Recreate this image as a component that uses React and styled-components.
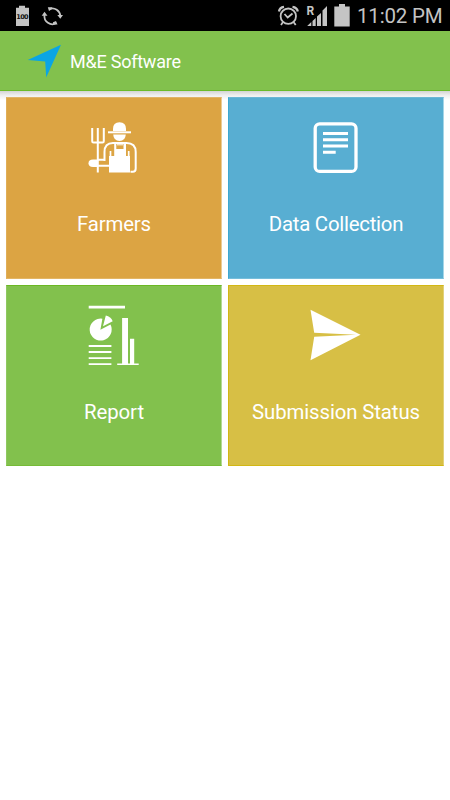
import React from 'react';
import styled, { createGlobalStyle } from 'styled-components';

const GlobalStyle = createGlobalStyle`
  * { box-sizing: border-box; }
  body { margin: 0; background: #fff; font-family: Roboto, "Noto Sans", sans-serif; }
`;

const Screen = styled.div`
  width: 450px;
  height: 800px;
  overflow: hidden;
  background: #fff;
`;

const StatusBar = styled.div`
  height: 31px;
  display: flex;
  justify-content: space-between;
  background: #000;
  color: #c4c4c4;
`;

const StatusIcons = styled.svg`
  display: block;
  height: 31px;
  width: ${(p) => p.$width}px;
`;

const StatusRight = styled.div`
  display: flex;
  padding-right: 8px;
`;

const Clock = styled.span`
  font-size: 20.5px;
  line-height: 32px;
  width: 85px;
  white-space: nowrap;
  letter-spacing: ${(p) => p.$spacing}px;
`;

const BadgeText = styled.text`
  font: 700 6.5px "DejaVu Sans", sans-serif;
  fill: #111;
`;

const RoamingText = styled.text`
  font: 700 12.5px Roboto, sans-serif;
  fill: #c4c4c4;
`;

const AppBar = styled.header`
  height: 60px;
  padding-left: 27px;
  display: flex;
  align-items: center;
  background: #82c14d;
  border-bottom: 1px solid #6bbb2b;
  color: #fff;
`;

const Logo = styled.svg`
  display: block;
  width: 35px;
  height: 36px;
`;

const Title = styled.h1`
  margin: 3px 0 0 8px;
  font-size: 18px;
  line-height: 24px;
  font-weight: 400;
  white-space: nowrap;
  letter-spacing: ${(p) => p.$spacing}px;
`;

const Grid = styled.main`
  display: grid;
  grid-template-columns: 216px 216px;
  grid-template-rows: 182px 181px;
  gap: 6px;
  padding: 6px;
  background: linear-gradient(#d4d4d4, #ededed 4px, #fff 9px);
`;

const Tile = styled.section`
  display: flex;
  flex-direction: column;
  align-items: center;
  padding-top: 12px;
  background: ${(p) => p.$color};
  border: 1px solid;
  border-color: ${(p) => p.$edges};
  color: #fff;
`;

const TileIcon = styled.svg`
  display: block;
  width: 80px;
  height: 80px;
  flex: none;
`;

const TileLabel = styled.span`
  margin-top: 22px;
  font-size: 20.4px;
  line-height: 24px;
  white-space: nowrap;
  letter-spacing: ${(p) => p.$spacing}px;
`;

const FarmerIcon = () => (
  <TileIcon viewBox="74 110 80 80" fill="none" stroke="#fff">
    <path d="M92.2 128V141.2Q92.2 142.5 93.5 142.5H102.5Q103.8 142.5 103.8 141.2V128M97.8 128V172.5" strokeWidth="2" />
    <path d="M113 131V129Q113 122.3 119.5 122.3T126 129V131Z" fill="#fff" stroke="none" />
    <path d="M108 132.3H131" strokeWidth="2" />
    <path d="M113.2 134.5H125.8Q125.3 141 119.5 141T113.2 134.5Z" fill="#fff" stroke="none" />
    <path d="M104.5 161V152Q104.5 143 113 143H126.5Q135.7 143 135.7 152V168.5Q135.7 171.8 132.8 171.8H130.5M104.5 159.8H98M98 165.8H110" strokeWidth="2" />
    <path d="M98 159.5H93Q88.5 159.5 88.5 163.2T93 167H98Z" fill="#fff" stroke="none" />
    <path d="M110.5 151V160M128.7 151V160" strokeWidth="1.7" />
    <path d="M109 156H114.2V143.5H116.3V149H123.5V143.5H126V156H130V172.5H109Z" fill="#fff" stroke="none" />
    <path d="M117 144.8H123" strokeWidth="1" />
  </TileIcon>
);

const DocumentIcon = () => (
  <TileIcon viewBox="296 110 80 80" fill="none" stroke="#fff" strokeWidth="3">
    <rect x="315.2" y="123.8" width="40.8" height="47.6" rx="4.5" strokeWidth="3.3" />
    <path d="M323 133.5H348M323 139.7H348M323 146H348M323 152.3H335.7" />
  </TileIcon>
);

const ReportIcon = () => (
  <TileIcon viewBox="74 298 80 80" fill="#fff">
    <path d="M88.7 305.8H125V308.4H88.7ZM88.7 345.1H111.4V347H88.7ZM88.7 351H111.4V352.9H88.7ZM88.7 357.2H111.4V359.1H88.7ZM88.7 363.2H111.4V365.1H88.7Z" />
    <path d="M122.1 318H128V363.6H130V338.7H134.2V363.6H138.7V365H117.2V363.6H122.1Z" />
    <path d="M102.4 318.7L100.4 329.7L110.5 324.6A11 11 0 1 1 102.4 318.7Z" />
    <path d="M105.8 315.5Q110.8 316.5 112.7 321.2L103 326.3Z" />
  </TileIcon>
);

const SendIcon = () => (
  <TileIcon viewBox="296 298 80 80" fill="#fff">
    <path d="M310.5 309.8L360.5 334.8L310.5 360.3L314.2 336.8L356 334.8L314.2 332.8Z" />
  </TileIcon>
);

const tiles = [
  { label: 'Farmers', color: '#dca443', edges: '#e0b468 #eccb94 #e3b564 #e0ae58', spacing: -0.15, Icon: FarmerIcon },
  { label: 'Data Collection', color: '#58aed2', edges: '#6cb7d6 #a5d5e7 #76bedb #3da8d2', spacing: -0.25, Icon: DocumentIcon },
  { label: 'Report', color: '#82c14d', edges: '#6bb723 #b3da93 #76bb37 #8fc861', spacing: -0.08, Icon: ReportIcon },
  { label: 'Submission Status', color: '#d7bf45', edges: '#d2b714 #e2d17a #d2b714 #d2b714', spacing: -0.12, Icon: SendIcon },
];

export default function App() {
  return (
    <Screen>
      <GlobalStyle />
      <StatusBar>
        <StatusIcons $width={70} viewBox="0 0 70 31" fill="#c4c4c4">
          <path d="M19 5.7H25V7.7H29V26H16V7.7H19Z" />
          <BadgeText x="16.2" y="18.7" textLength="12.4">100</BadgeText>
          <g fill="none" stroke="#c4c4c4" strokeWidth="1.8">
            <path d="M49.5 8.9A8 8 0 0 1 60.3 16M56.5 23.1A8 8 0 0 1 44.5 15" />
          </g>
          <path d="M57.3 15H63L60.3 18.7ZM41.7 15.7H47.5L44.5 11.8ZM47.8 7.3H52V9L49 11ZM57.5 24.4H53V22.3L56 21Z" />
        </StatusIcons>
        <StatusRight>
          <StatusIcons $width={87} viewBox="270 0 87 31" fill="#c4c4c4">
            <g fill="none" stroke="#c4c4c4" strokeWidth="1.8">
              <circle cx="288.3" cy="16.2" r="7.7" />
              <path d="M284.5 14L287.7 17.5L292.5 13.5M283 22L281 25M293.5 22L295.7 25" />
              <path d="M279 11.5Q279.5 7.5 284 6.9M292.5 6.9Q297 7.5 297.8 11.5" strokeWidth="2.3" />
            </g>
            <RoamingText x="306.5" y="14.8" textLength="7.7" lengthAdjust="spacingAndGlyphs">R</RoamingText>
            <path d="M307.2 26L311.3 22V26ZM312.5 21L315.7 18V26H312.5ZM317 16.5L321 13V26H317ZM322.5 10.5L327 6V26H322.5ZM339 4H345V6.5H349.7V26.5H334.3V6.5H339Z" />
          </StatusIcons>
          <Clock $spacing={-0.2}>11:02 PM</Clock>
        </StatusRight>
      </StatusBar>
      <AppBar>
        <Logo viewBox="27 43.5 35 36" fill="#0aa5e5">
          <path d="M61 45.3L46.2 78L45.2 62L27.7 60.5Z" />
        </Logo>
        <Title $spacing={-0.23}>M&amp;E Software</Title>
      </AppBar>
      <Grid>
        {tiles.map(({ label, color, edges, spacing, Icon }) => (
          <Tile key={label} $color={color} $edges={edges}>
            <Icon />
            <TileLabel $spacing={spacing}>{label}</TileLabel>
          </Tile>
        ))}
      </Grid>
    </Screen>
  );
}
